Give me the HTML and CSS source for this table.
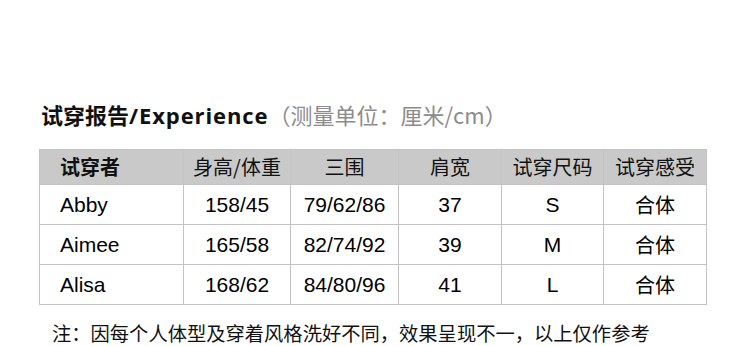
FILE: index.html
```html
<!DOCTYPE html>
<html lang="zh-CN">
<head>
    <meta charset="UTF-8">
    <title>试穿报告</title>
    <link rel="stylesheet" href="styles.css">
</head>
<body>
    <div class="report">
        <h2 class="report-title">试穿报告<span class="latin">/Experience</span><span class="unit">（测量单位：厘米/cm）</span></h2>

        <table class="fit-table">
            <colgroup>
                <col class="c-name">
                <col class="c-hw">
                <col class="c-bwh">
                <col class="c-sh">
                <col class="c-size">
                <col class="c-feel">
            </colgroup>
            <thead>
                <tr>
                    <th class="name">试穿者</th>
                    <th>身高/体重</th>
                    <th>三围</th>
                    <th>肩宽</th>
                    <th>试穿尺码</th>
                    <th>试穿感受</th>
                </tr>
            </thead>
            <tbody>
                <tr>
                    <td class="name">Abby</td>
                    <td>158/45</td>
                    <td>79/62/86</td>
                    <td>37</td>
                    <td>S</td>
                    <td class="cjk">合体</td>
                </tr>
                <tr>
                    <td class="name">Aimee</td>
                    <td>165/58</td>
                    <td>82/74/92</td>
                    <td>39</td>
                    <td>M</td>
                    <td class="cjk">合体</td>
                </tr>
                <tr>
                    <td class="name">Alisa</td>
                    <td>168/62</td>
                    <td>84/80/96</td>
                    <td>41</td>
                    <td>L</td>
                    <td class="cjk">合体</td>
                </tr>
            </tbody>
        </table>

        <p class="note">注：因每个人体型及穿着风格洗好不同，效果呈现不一，以上仅作参考</p>
    </div>
</body>
</html>
```

FILE: styles.css
```css
* {
    margin: 0;
    padding: 0;
    box-sizing: border-box;
}

body {
    background: #fff;
    color: #000;
    font-family: "Noto Sans CJK SC", "Noto Sans", sans-serif;
}

.report {
    padding: 98px 0 0 39px;
}

.report-title {
    font-family: "Open Sans", "Noto Sans CJK SC", sans-serif;
    font-size: 22px;
    line-height: 32px;
    height: 34px;
    font-weight: bold;
    color: #111;
    padding-left: 2px;
}

.report-title .latin {
    letter-spacing: 0.9px;
}

.unit {
    font-family: "Noto Sans CJK SC", sans-serif;
    font-weight: normal;
    color: #8c8c8c;
    font-size: 22px;
}

.fit-table {
    margin-top: 17px;
    border-collapse: collapse;
    table-layout: fixed;
    width: 667px;
}

.c-name { width: 144px; }
.c-hw { width: 107px; }
.c-bwh { width: 108px; }
.c-sh { width: 103px; }
.c-size { width: 102px; }
.c-feel { width: 103px; }

.fit-table th,
.fit-table td {
    border: 1px solid #c3c3c3;
    text-align: center;
    padding: 0;
    line-height: 24px;
}

.fit-table th {
    background: #c9c9c9;
    height: 35px;
    font-size: 20px;
    font-weight: normal;
    color: #111;
}

.fit-table th.name {
    font-weight: bold;
}

.fit-table td {
    height: 40px;
    font-family: "Liberation Sans", Arial, sans-serif;
    font-size: 21px;
}

.fit-table td.cjk {
    font-family: "Noto Sans CJK SC", sans-serif;
    font-size: 20px;
}

.fit-table .name {
    text-align: left;
    padding-left: 20px;
}

.note {
    margin-top: 17px;
    padding-left: 13px;
    font-size: 19.3px;
    line-height: 22px;
    color: #111;
}
```
